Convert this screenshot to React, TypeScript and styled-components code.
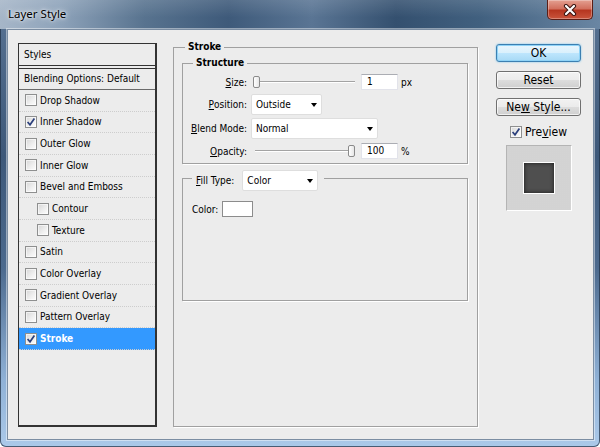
import styled, { createGlobalStyle } from "styled-components";

const GlobalStyle = createGlobalStyle`
  html, body {
    margin: 0;
    padding: 0;
  }
  body {
    width: 600px;
    height: 447px;
    overflow: hidden;
    font-family: "DejaVu Sans Condensed", "DejaVu Sans", sans-serif;
    font-size: 10px;
    color: #000;
  }
  * {
    box-sizing: border-box;
  }
`;

const Window = styled.div`
  width: 600px;
  height: 447px;
  display: flex;
  flex-direction: column;
  border-radius: 0 0 6px 6px;
  overflow: hidden;
  background: linear-gradient(180deg, #5a7494 0%, #3d5879 35%, #4c6a8e 60%, #8fb1d6 85%, #abc9e9 100%);
  box-shadow: inset 0 0 0 1px rgba(30, 45, 65, 0.7);
`;

const TitleBar = styled.div`
  height: 29px;
  flex: none;
  display: flex;
  align-items: flex-start;
  justify-content: space-between;
  background:
    linear-gradient(180deg, rgba(255, 255, 255, 0.12) 0%, rgba(255, 255, 255, 0) 60%),
    linear-gradient(90deg, #a6b6c8 0%, #8ea3ba 10%, #58738f 24%, #3e5a7a 38%, #5a7594 52%, #34506f 66%, #41607f 80%, #6a86a3 100%);
`;

const Title = styled.div`
  font-family: "Noto Sans", "Liberation Sans", sans-serif;
  font-size: 11.5px;
  line-height: 14px;
  padding: 7px 0 0 8px;
  color: #000;
  text-shadow: 0 0 6px #fff, 0 0 3px rgba(255, 255, 255, 0.9);
`;

const CloseButton = styled.div`
  width: 46px;
  height: 20px;
  margin-right: 7px;
  display: flex;
  align-items: center;
  justify-content: center;
  border: 1px solid #5b1e16;
  border-top: none;
  border-radius: 0 0 5px 5px;
  background: linear-gradient(180deg, #e4a091 0%, #d2705e 45%, #b63620 55%, #c9543c 100%);
  box-shadow: inset 0 0 0 1px rgba(255, 255, 255, 0.3);
`;

const Client = styled.div`
  flex: 1;
  margin: 0 6px 7px 7px;
  background: #ececec;
  border: 1px solid #7b8da2;
  box-shadow: 0 0 0 1px rgba(255, 255, 255, 0.45);
  display: flex;
  align-items: flex-start;
  padding: 11px 0 0 10px;
`;

/* ---------- styles list ---------- */

const StylesPanel = styled.div`
  width: 139px;
  height: 384px;
  margin-top: 2px;
  flex: none;
  border: solid #333;
  border-width: 1px 2px 2px 1px;
  display: flex;
  flex-direction: column;
`;

const PanelHeader = styled.div`
  height: 25px;
  line-height: 21px;
  padding-left: 5px;
  border-bottom: 4px double #333;
`;

const BlendRow = styled.div`
  height: 21px;
  line-height: 20px;
  padding-left: 5px;
  border-bottom: 1px solid #6a6a6a;
`;

const StyleRow = styled.div<{ $indent?: boolean; $selected?: boolean }>`
  height: 21.67px;
  flex: none;
  display: flex;
  align-items: center;
  gap: 3px;
  padding-left: ${({ $indent }) => ($indent ? 18 : 6)}px;
  border-bottom: 1px dotted #cdcdcd;
  background: ${({ $selected }) => ($selected ? "#3399ff" : "transparent")};
  color: ${({ $selected }) => ($selected ? "#fff" : "#000")};
  font-weight: ${({ $selected }) => ($selected ? "bold" : "normal")};
`;

const CheckBox = styled.span`
  width: 12px;
  height: 12px;
  flex: none;
  display: flex;
  align-items: center;
  justify-content: center;
  border: 1px solid #8e8f8f;
  background: linear-gradient(135deg, #d6d6d6 0%, #f0f0f0 60%, #fdfdfd 100%);
  box-shadow: inset 0 0 0 1px rgba(255, 255, 255, 0.6);
`;

const Check = ({ checked }: { checked?: boolean }) => (
  <CheckBox>
    {checked && (
      <svg width="10" height="10" viewBox="0 0 10 10">
        <path d="M1.6 5 L4 7.8 L8.4 1.6" fill="none" stroke="#2b3f7c" strokeWidth="1.7" />
      </svg>
    )}
  </CheckBox>
);

/* ---------- group boxes ---------- */

const GroupBox = styled.fieldset`
  margin: 0;
  min-width: 0;
  border: 1px solid #a0a0a0;
  box-shadow: 1px 1px 0 #fff;
`;

const StrokeGroup = styled(GroupBox)`
  width: 305px;
  height: 386px;
  margin-left: 16px;
  flex: none;
  padding: 4px 9px 0 8px;
`;

const StructureGroup = styled(GroupBox)`
  padding: 4px 0 3px 0;
`;

const FillGroup = styled(GroupBox)`
  height: 131px;
  margin-top: 6px;
  padding: 15px 0 0 9px;
`;

const Legend = styled.legend<{ $offset: number }>`
  padding: 0 3px;
  margin-left: ${({ $offset }) => $offset}px;
  font-weight: bold;
  line-height: 12px;
`;

const FillLegend = styled.legend`
  height: 16px;
  padding: 0 6px 0 4px;
  display: flex;
  align-items: flex-start;
  gap: 8px;
`;

const Key = styled.span`
  text-decoration: underline;
`;

const FormGrid = styled.div`
  display: grid;
  grid-template-columns: 64px 1fr;
  grid-template-rows: 18px 21px 21px 18px;
  column-gap: 4px;
  row-gap: 3px;
`;

const FieldLabel = styled.div`
  display: flex;
  align-items: center;
  justify-content: flex-end;
  white-space: nowrap;
`;

const FieldControl = styled.div`
  display: flex;
  align-items: center;
`;

const Slider = styled.div`
  position: relative;
  width: 104px;
  height: 18px;
  margin-left: 2px;
  display: flex;
  align-items: center;
`;

const Track = styled.div`
  flex: 1;
  margin: 0 2px;
  height: 2px;
  border-top: 1px solid #a3a3a3;
  border-bottom: 1px solid #fff;
`;

const Thumb = styled.div`
  position: absolute;
  top: 3px;
  width: 7px;
  height: 12px;
  border: 1px solid #8a8a8a;
  border-radius: 2px;
  background: linear-gradient(90deg, #ffffff 0%, #e6e6e6 100%);
`;

const NumberBox = styled.div`
  width: 37px;
  height: 16px;
  margin-left: 4px;
  padding-left: 5px;
  line-height: 14px;
  background: #fff;
  border: 1px solid #e2e3ea;
  border-top-color: #abadb3;
`;

const Unit = styled.span`
  margin-left: 3px;
`;

const Select = styled.div<{ $width: number }>`
  width: ${({ $width }) => $width}px;
  height: 21px;
  flex: none;
  display: flex;
  align-items: center;
  justify-content: space-between;
  padding: 0 4px 0 4px;
  background: #fff;
  border: 1px solid #dedede;
  border-radius: 2px;
  font-weight: normal;
`;

const Arrow = styled.span`
  width: 0;
  height: 0;
  border-left: 3.5px solid transparent;
  border-right: 3.5px solid transparent;
  border-top: 4px solid #000;
`;

const LegendLabel = styled.span`
  line-height: 21px;
  font-weight: normal;
`;

const ColorRow = styled.div`
  display: flex;
  align-items: center;
  gap: 4px;
`;

const Swatch = styled.div`
  width: 31px;
  height: 16px;
  background: #fff;
  border: 1px solid #8c8c8c;
`;

/* ---------- right column ---------- */

const ButtonColumn = styled.div`
  width: 85px;
  margin: 3px 0 0 18px;
  flex: none;
  display: flex;
  flex-direction: column;
  align-items: center;
  gap: 9px;
`;

const DialogButton = styled.div<{ $primary?: boolean }>`
  width: 85px;
  height: 18px;
  display: flex;
  align-items: center;
  justify-content: center;
  font-size: 12px;
  border: 1px solid ${({ $primary }) => ($primary ? "#3c7fb1" : "#707070")};
  border-radius: 3px;
  background: ${({ $primary }) =>
    $primary
      ? "linear-gradient(180deg, #eaf6fd 0%, #d9f0fc 50%, #bee6fd 50%, #a7d9f5 100%)"
      : "linear-gradient(180deg, #f2f2f2 0%, #ebebeb 50%, #dddddd 50%, #cfcfcf 100%)"};
  box-shadow: ${({ $primary }) =>
    $primary ? "inset 0 0 0 1px #8fd3f7, 0 0 2px #6cc0ef" : "inset 0 0 0 1px rgba(255,255,255,0.7)"};
`;

const PreviewRow = styled.div`
  height: 13px;
  display: flex;
  align-items: center;
  gap: 3px;
  font-size: 12px;
`;

const PreviewBox = styled.div`
  width: 66px;
  height: 66px;
  margin-top: -2px;
  display: flex;
  align-items: center;
  justify-content: center;
  border: 1px solid;
  border-color: #b4b4b4 #fff #fff #b4b4b4;
  background-color: #dadada;
  background-image: radial-gradient(#cbcbcb 0.6px, transparent 0.8px);
  background-size: 2px 2px;
`;

const PreviewSwatch = styled.div`
  width: 32px;
  height: 32px;
  background: #4f4f4f;
  border: 1px solid #fff;
  box-shadow: inset 0 0 4px #1a1a1a;
`;

const styleItems = [
  { label: "Drop Shadow" },
  { label: "Inner Shadow", checked: true },
  { label: "Outer Glow" },
  { label: "Inner Glow" },
  { label: "Bevel and Emboss" },
  { label: "Contour", indent: true },
  { label: "Texture", indent: true },
  { label: "Satin" },
  { label: "Color Overlay" },
  { label: "Gradient Overlay" },
  { label: "Pattern Overlay" },
  { label: "Stroke", checked: true, selected: true },
];

const thumbLeft = (value: number, max: number) => Math.round((value / max) * 95);

export default function App() {
  return (
    <>
      <GlobalStyle />
      <Window>
        <TitleBar>
          <Title>Layer Style</Title>
          <CloseButton>
            <svg width="16" height="12" viewBox="0 0 16 12">
              <path d="M4 2 L12 10 M12 2 L4 10" stroke="#3a1410" strokeWidth="4.2" strokeLinecap="round" />
              <path d="M4 2 L12 10 M12 2 L4 10" stroke="#fff" strokeWidth="2.2" strokeLinecap="round" />
            </svg>
          </CloseButton>
        </TitleBar>

        <Client>
          <StylesPanel>
            <PanelHeader>Styles</PanelHeader>
            <BlendRow>Blending Options: Default</BlendRow>
            {styleItems.map((item) => (
              <StyleRow key={item.label} $indent={item.indent} $selected={item.selected}>
                <Check checked={item.checked} />
                <span>{item.label}</span>
              </StyleRow>
            ))}
          </StylesPanel>

          <StrokeGroup>
            <Legend $offset={3}>Stroke</Legend>
            <StructureGroup>
              <Legend $offset={10}>Structure</Legend>
              <FormGrid>
                <FieldLabel>
                  <Key>S</Key>ize:
                </FieldLabel>
                <FieldControl>
                  <Slider>
                    <Track />
                    <Thumb style={{ left: thumbLeft(1, 250) }} />
                  </Slider>
                  <NumberBox>1</NumberBox>
                  <Unit>px</Unit>
                </FieldControl>

                <FieldLabel>
                  <Key>P</Key>osition:
                </FieldLabel>
                <FieldControl>
                  <Select $width={71}>
                    Outside
                    <Arrow />
                  </Select>
                </FieldControl>

                <FieldLabel>
                  <Key>B</Key>lend Mode:
                </FieldLabel>
                <FieldControl>
                  <Select $width={127}>
                    Normal
                    <Arrow />
                  </Select>
                </FieldControl>

                <FieldLabel>
                  <Key>O</Key>pacity:
                </FieldLabel>
                <FieldControl>
                  <Slider>
                    <Track />
                    <Thumb style={{ left: thumbLeft(100, 100) }} />
                  </Slider>
                  <NumberBox>100</NumberBox>
                  <Unit>%</Unit>
                </FieldControl>
              </FormGrid>
            </StructureGroup>

            <FillGroup>
              <FillLegend>
                <LegendLabel>
                  <Key>F</Key>ill Type:
                </LegendLabel>
                <Select $width={76}>
                  Color
                  <Arrow />
                </Select>
              </FillLegend>
              <ColorRow>
                <span>Color:</span>
                <Swatch />
              </ColorRow>
            </FillGroup>
          </StrokeGroup>

          <ButtonColumn>
            <DialogButton $primary>OK</DialogButton>
            <DialogButton>Reset</DialogButton>
            <DialogButton>
              Ne<Key>w</Key>&nbsp;Style...
            </DialogButton>
            <PreviewRow>
              <Check checked />
              <span>
                Pre<Key>v</Key>iew
              </span>
            </PreviewRow>
            <PreviewBox>
              <PreviewSwatch />
            </PreviewBox>
          </ButtonColumn>
        </Client>
      </Window>
    </>
  );
}
